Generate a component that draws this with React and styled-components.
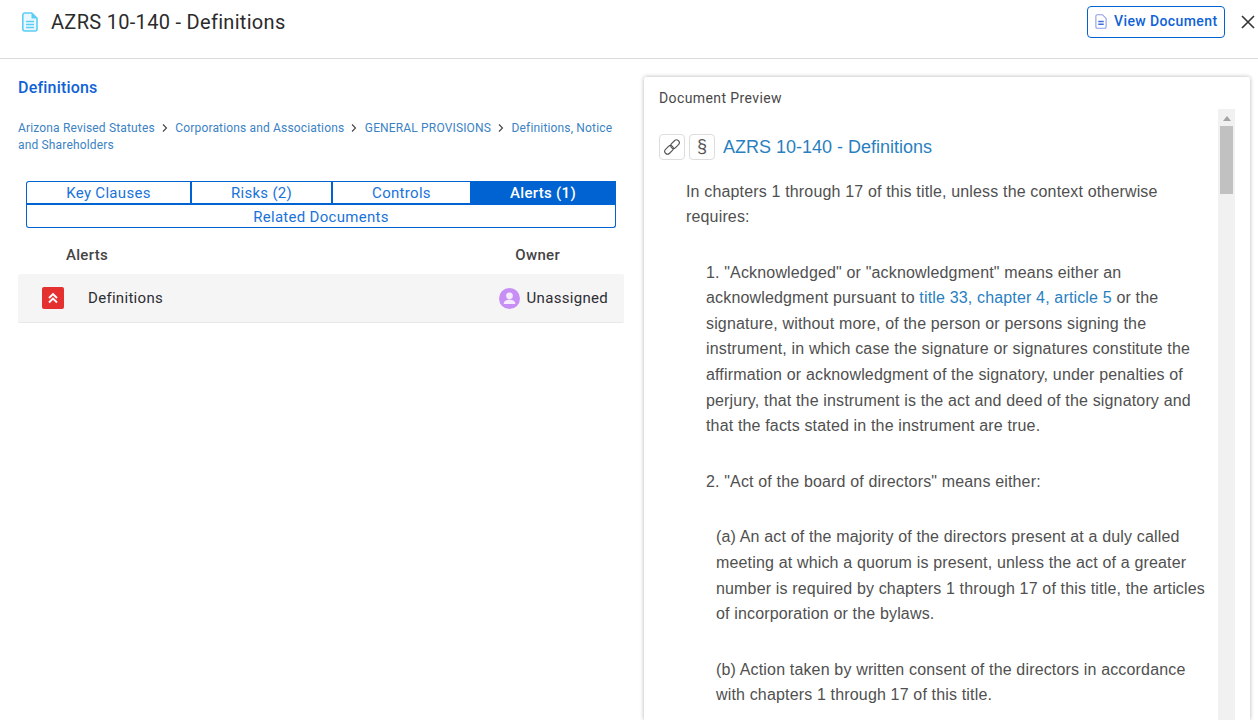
import React from 'react';
import styled, { createGlobalStyle } from 'styled-components';

const Global = createGlobalStyle`
html, body {
  margin: 0;
  padding: 0;
  height: 720px;
  overflow: hidden;
  background: #fff;
  font-family: Roboto, "Liberation Sans", sans-serif;
}
* { box-sizing: border-box; }
`;

const Page = styled.div`
width: 1258px;
height: 720px;
overflow: hidden;
display: flex;
flex-direction: column;
`;

const Header = styled.header`
height: 59px;
flex: none;
display: flex;
align-items: flex-start;
padding: 6px 0 0 22px;
border-bottom: 1px solid #dcdcdc;
`;

const HeaderIcon = styled.span`
width: 16px;
height: 20px;
margin-top: 6px;
flex: none;
`;

const Title = styled.h1`
margin: 3px 0 0 13px;
font-size: 20px;
line-height: 26px;
font-weight: 400;
letter-spacing: 0.3px;
color: #2b2b2b;
flex: 1;
`;

const ViewButton = styled.button`
width: 138px;
height: 32px;
border: 1px solid #0063d1;
border-radius: 4px;
background: #fff;
color: #0f62d6;
font: 500 14px Roboto, sans-serif;
letter-spacing: 0.4px;
display: flex;
align-items: center;
gap: 7px;
padding: 0 0 2px 7px;
margin-right: 15px;
`;

const CloseButton = styled.button`
width: 18px;
height: 32px;
border: 0;
background: none;
padding: 0 0 0 1px;
display: flex;
align-items: center;
`;

const Body = styled.div`
flex: 1;
display: flex;
min-height: 0;
`;

const Left = styled.section`
width: 644px;
flex: none;
padding: 19px 20px 0 18px;
`;

const Heading = styled.h2`
margin: 0;
font-size: 16px;
line-height: 20px;
font-weight: 500;
letter-spacing: 0.2px;
color: #0f62d6;
`;

const Crumbs = styled.div`
margin-top: 22px;
font-size: 12px;
line-height: 17px;
color: #3b82c4;
letter-spacing: 0.16px;
width: 600px;
`;

const Sep = styled.svg`
width: 8px;
height: 8px;
margin: 0 6.5px 0 6px;
`;

const Tabs = styled.div`
margin: 27px 8px 0;
display: grid;
grid-template-columns: 165px 141px 139px 145px;
`;

const Tab = styled.div`
height: 24px;
border: 1px solid #0063d1;
border-bottom-width: 2px;
margin-left: ${p => (p.$active ? -1 : 0)}px;
border-radius: ${p => p.$radius || 0};
background: ${p => (p.$active ? '#0063d1' : '#fff')};
color: ${p => (p.$active ? '#fff' : '#1a73d9')};
font-weight: ${p => (p.$active ? 500 : 400)};
font-size: 15px;
letter-spacing: 0.3px;
display: flex;
align-items: center;
justify-content: center;
`;

const WideTab = styled(Tab)`
grid-column: 1 / -1;
height: 23px;
border-top: 0;
border-bottom-width: 1px;
padding-top: 1px;
`;

const Columns = styled.div`
height: 46px;
display: flex;
align-items: center;
justify-content: space-between;
padding: 7px 64px 0 48px;
font-size: 15px;
font-weight: 500;
letter-spacing: 0.3px;
color: #444;
`;

const Row = styled.div`
height: 49px;
background: #f5f5f5;
border-bottom: 1px solid #e8e8e8;
border-radius: 2px;
display: flex;
align-items: center;
padding: 0 16px 0 24px;
font-size: 15px;
letter-spacing: 0.3px;
color: #2d2d33;
`;

const Priority = styled.span`
width: 22px;
height: 22px;
background: #e53030;
border-radius: 2px;
display: flex;
align-items: center;
justify-content: center;
`;

const RowName = styled.span`
margin-left: 24px;
flex: 1;
`;

const Avatar = styled.svg`
width: 21px;
height: 21px;
margin-right: 7px;
`;

const Preview = styled.section`
width: 606px;
flex: none;
margin-top: 18px;
background: #fff;
box-shadow: 0 0 4px rgba(0, 0, 0, 0.3);
border-radius: 2px 2px 0 0;
padding: 13px 15px 0;
overflow: hidden;
`;

const PreviewLabel = styled.div`
font-size: 14px;
line-height: 16px;
letter-spacing: 0.4px;
color: #484848;
`;

const Scroller = styled.div`
margin-top: 3px;
display: flex;
gap: 12px;
`;

const Doc = styled.article`
width: 547px;
flex: none;
padding-top: 25px;
font-family: "Liberation Sans", Arial, sans-serif;
font-size: 16px;
line-height: 25.6px;
letter-spacing: 0.16px;
color: #505050;
`;

const DocHead = styled.div`
display: flex;
align-items: center;
gap: 4px;
`;

const DocTitle = styled.a`
margin-left: 4px;
font-size: 18px;
line-height: 26px;
letter-spacing: 0;
color: #2a7fc0;
`;

const IconBox = styled.span`
width: 26px;
height: 26px;
border: 1px solid #ddd;
border-radius: 4px;
display: flex;
align-items: center;
justify-content: center;
font-size: 18px;
color: #555;
`;

const Para = styled.p`
margin: ${p => p.$top}px 0 0 ${p => p.$indent}px;
`;

const Link = styled.a`
color: #2a7fc0;
`;

const Scrollbar = styled.div`
width: 17px;
height: 620px;
background: #f1f1f1;
flex: none;
padding: 0 2px;
`;

const Arrow = styled.div`
width: 0;
height: 0;
margin: 7px auto 5px;
border: 4px solid transparent;
border-top: 0;
border-bottom: 5px solid #a3a3a3;
`;

const Thumb = styled.div`
height: 68px;
background: #c1c1c1;
`;

const Chevron = () => (
  <Sep viewBox="0 0 8 8" fill="none">
    <path d="M2 0.5 5.5 4 2 7.5" stroke="#444" strokeWidth="1.1" />
  </Sep>
);

const App = () => (
  <Page>
    <Global />
    <Header>
      <HeaderIcon>
        <svg viewBox="0 0 16 20" width="16" height="20" fill="none">
          <path d="M2.8 1h7L15 6.2V17a2 2 0 0 1-2 2H2.8a2 2 0 0 1-2-2V3a2 2 0 0 1 2-2z" fill="#eaf8fe" stroke="#5ccdf5" strokeWidth="1.6" strokeLinejoin="round" />
          <path d="M9.5 1v5.5H15z" fill="#5ccdf5" />
          <path d="M4 9.5h8M4 12.5h8M4 15.5h8" stroke="#5ccdf5" strokeWidth="1.5" />
        </svg>
      </HeaderIcon>
      <Title>AZRS 10-140 - Definitions</Title>
      <ViewButton>
        <svg width="12" height="15" viewBox="0 0 17 22"><path d="M3 1h7.5L16 6.5V19a2 2 0 0 1-2 2H3a2 2 0 0 1-2-2V3a2 2 0 0 1 2-2z" fill="#fff" stroke="#8f9be8" strokeWidth="1.6" /><path d="M4.5 11h8M4.5 15h8" stroke="#3f6fd8" strokeWidth="2" /></svg>
        View Document
      </ViewButton>
      <CloseButton aria-label="Close">
        <svg width="14" height="14" viewBox="0 0 14 14"><path d="M1 1l12 12M13 1 1 13" stroke="#333" strokeWidth="1.6" /></svg>
      </CloseButton>
    </Header>
    <Body>
      <Left>
        <Heading>Definitions</Heading>
        <Crumbs>
          Arizona Revised Statutes<Chevron />Corporations and Associations<Chevron />GENERAL PROVISIONS<Chevron />Definitions, Notice<br />and Shareholders
        </Crumbs>
        <Tabs>
          <Tab $radius="3px 0 0 0">Key Clauses</Tab>
          <Tab>Risks (2)</Tab>
          <Tab>Controls</Tab>
          <Tab $active>Alerts (1)</Tab>
          <WideTab $radius="0 0 3px 3px">Related Documents</WideTab>
        </Tabs>
        <Columns><span>Alerts</span><span>Owner</span></Columns>
        <Row>
          <Priority>
            <svg width="12" height="12" viewBox="0 0 12 12" fill="none"><path d="M2 6 6 2l4 4M2 10.5l4-4 4 4" stroke="#fff" strokeWidth="1.9" /></svg>
          </Priority>
          <RowName>Definitions</RowName>
          <Avatar viewBox="0 0 20 20">
            <circle cx="10" cy="10" r="10" fill="#c78ff5" />
            <circle cx="10" cy="7.4" r="3.2" fill="#f6ecff" />
            <path d="M4.5 15.2c0-2.8 2.5-4 5.5-4s5.5 1.2 5.5 4z" fill="#f6ecff" />
          </Avatar>
          Unassigned
        </Row>
      </Left>
      <Preview>
        <PreviewLabel>Document Preview</PreviewLabel>
        <Scroller>
          <Doc>
            <DocHead>
              <IconBox>
                <svg width="18" height="18" viewBox="0 0 24 24" fill="none" stroke="#555" strokeWidth="1.5">
                  <rect x="1.5" y="12" width="13" height="7.5" rx="3.75" transform="rotate(-45 8 15.75)" />
                  <rect x="9.5" y="4.5" width="13" height="7.5" rx="3.75" transform="rotate(-45 16 8.25)" />
                </svg>
              </IconBox>
              <IconBox>§</IconBox>
              <DocTitle>AZRS 10-140 - Definitions</DocTitle>
            </DocHead>
            <Para $indent={27} $top={18.5}>In chapters 1 through 17 of this title, unless the context otherwise requires:</Para>
            <Para $indent={47} $top={30}>1. "Acknowledged" or "acknowledgment" means either an acknowledgment pursuant to <Link>title 33, chapter 4, article 5</Link> or the signature, without more, of the person or persons signing the instrument, in which case the signature or signatures constitute the affirmation or acknowledgment of the signatory, under penalties of perjury, that the instrument is the act and deed of the signatory and that the facts stated in the instrument are true.</Para>
            <Para $indent={47} $top={30}>2. "Act of the board of directors" means either:</Para>
            <Para $indent={57} $top={30}>(a) An act of the majority of the directors present at a duly called meeting at which a quorum is present, unless the act of a greater number is required by chapters 1 through 17 of this title, the articles of incorporation or the bylaws.</Para>
            <Para $indent={57} $top={30}>(b) Action taken by written consent of the directors in accordance with chapters 1 through 17 of this title.</Para>
          </Doc>
          <Scrollbar>
            <Arrow />
            <Thumb />
          </Scrollbar>
        </Scroller>
      </Preview>
    </Body>
  </Page>
);

export default App;
